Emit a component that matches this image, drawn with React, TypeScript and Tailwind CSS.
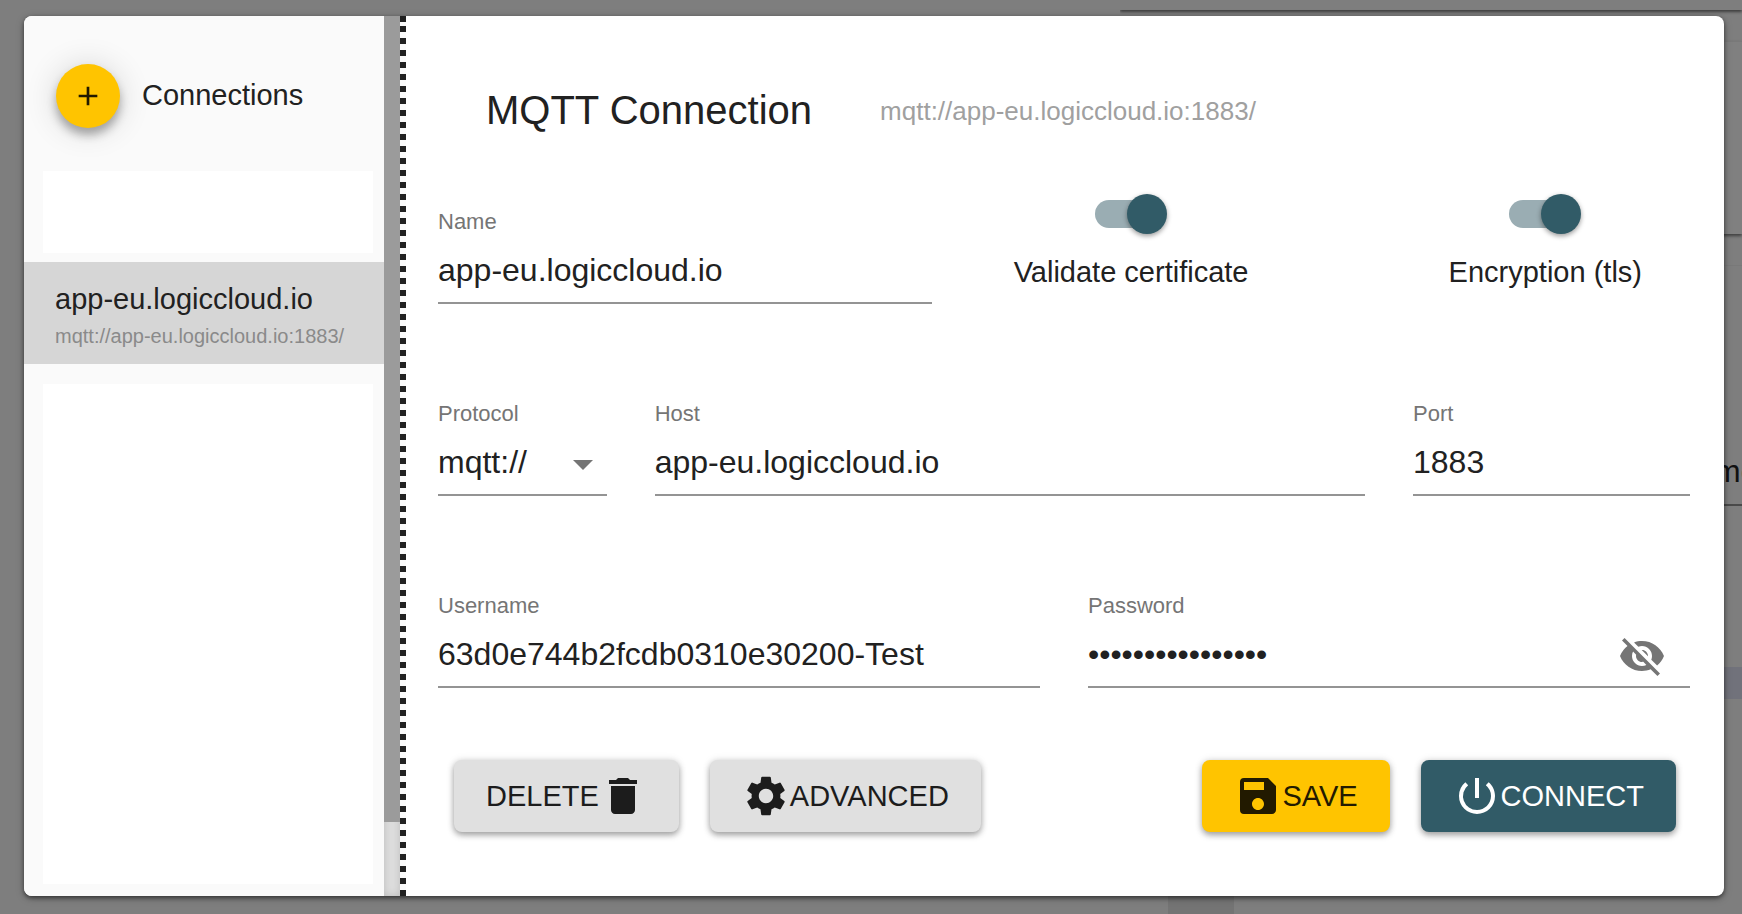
import { useState } from 'react';
import type { InputHTMLAttributes, ReactNode } from 'react';
import {
  MdAdd,
  MdArrowDropDown,
  MdDelete,
  MdPowerSettingsNew,
  MdSave,
  MdSettings,
  MdVisibility,
  MdVisibilityOff,
} from 'react-icons/md';

interface Connection {
  name: string;
  protocol: string;
  host: string;
  port: string;
  username: string;
  password: string;
}

const initialConnection: Connection = {
  name: 'app-eu.logiccloud.io',
  protocol: 'mqtt://',
  host: 'app-eu.logiccloud.io',
  port: '1883',
  username: '63d0e744b2fcdb0310e30200-Test',
  password: 'abcdefghijklmnop',
};

const controlClass =
  'block h-[68px] w-full appearance-none rounded-none border-b-2 border-[#949494] bg-transparent pt-[2px] text-[32px] text-[#212121] focus:outline-none';

interface TextFieldProps extends InputHTMLAttributes<HTMLInputElement> {
  id: string;
  label: string;
}

function FieldLabel({ id, children }: { id: string; children: ReactNode }) {
  return (
    <label htmlFor={id} className="block text-[22px] leading-7 text-[#757575]">
      {children}
    </label>
  );
}

function TextField({ id, label, ...props }: TextFieldProps) {
  return (
    <div>
      <FieldLabel id={id}>{label}</FieldLabel>
      <input id={id} className={controlClass} {...props} />
    </div>
  );
}

function Toggle({ label }: { label: string }) {
  const [checked, setChecked] = useState(true);

  return (
    <label className="-mt-4 flex cursor-pointer flex-col items-center gap-5 text-[29px] leading-8">
      <span className="relative flex h-11 w-[72px] items-center">
        <input
          type="checkbox"
          checked={checked}
          onChange={(e) => setChecked(e.target.checked)}
          className="peer h-7 w-[68px] appearance-none rounded-full bg-[#b0b0b0] checked:bg-[#9aadb3]"
        />
        <span className="pointer-events-none absolute left-0 h-10 w-10 rounded-full bg-[#fafafa] shadow-[0_2px_5px_rgba(0,0,0,0.4)] peer-checked:left-8 peer-checked:bg-[#315b67]" />
      </span>
      {label}
    </label>
  );
}

interface ActionButtonProps {
  className: string;
  children: ReactNode;
}

function ActionButton({ className, children }: ActionButtonProps) {
  return (
    <button
      type="button"
      className={`flex h-[72px] items-center rounded-lg px-8 text-[29px] shadow-[0_3px_6px_rgba(0,0,0,0.35),0_0_8px_rgba(0,0,0,0.1)] ${className}`}
    >
      {children}
    </button>
  );
}

// Dimmed application that stays visible around the dialog
function Backdrop() {
  return (
    <div aria-hidden="true" className="absolute inset-0 flex justify-end overflow-hidden">
      <div className="flex w-[622px] flex-col overflow-hidden">
        <div className="h-[10px] shrink-0 shadow-[0_2px_3px_rgba(0,0,0,0.5)]" />
        <div className="mt-[31px] h-[193px] shrink-0 border-t border-[#797979] bg-[#808080] shadow-[0_2px_3px_rgba(0,0,0,0.5)]" />
        <div className="mt-[31px] flex h-[241px] shrink-0 items-end justify-end border-t border-b-2 border-t-[#797979] border-b-[#4a4a4a]">
          <span className="w-7 text-[32px] leading-[66px] text-[#111111]">me</span>
        </div>
        <div className="mt-[161px] h-8 shrink-0 bg-[#71727b]" />
        <div className="ml-12 w-[66px] flex-1 bg-[#747474]" />
      </div>
    </div>
  );
}

function Sidebar({ connection }: { connection: Connection }) {
  return (
    <aside className="flex w-[382px] shrink-0 bg-[#fafafa]">
      <div className="flex w-[360px] flex-col">
        <div className="flex items-center gap-[22px] px-8 pt-12 pb-[43px]">
          <button
            type="button"
            aria-label="Add connection"
            className="flex h-16 w-16 items-center justify-center rounded-full bg-[#ffc400] text-[#221a00] shadow-[0_7px_10px_rgba(0,0,0,0.3),0_2px_32px_rgba(0,0,0,0.16)]"
          >
            <MdAdd className="h-8 w-8" />
          </button>
          <h2 className="pb-[2px] text-[29px] leading-9">Connections</h2>
        </div>
        <div className="mr-[11px] ml-[19px] h-[82px] bg-white" />
        <button type="button" className="mt-[9px] bg-[#d6d6d6] pt-[19px] pr-8 pb-[14px] pl-[31px] text-left">
          <span className="block text-[29px] leading-9">{connection.name}</span>
          <span className="block pt-[5px] text-[20px] leading-7 text-[#8a8a8a]">
            {connection.protocol}
            {connection.host}:{connection.port}/
          </span>
        </button>
        <div className="mt-5 mr-[11px] mb-3 ml-[19px] flex-1 bg-white" />
      </div>
      <div className="flex w-4 flex-col bg-[#dedede] shadow-[inset_0_0_8px_rgba(0,0,0,0.16)]">
        <div className="flex-1 bg-[#9b9b9b]" />
        <div className="h-[74px]" />
      </div>
      <div className="w-[6px] bg-[repeating-linear-gradient(to_top,#212121_0_6px,#fafafa_6px_12px)]">
        <div className="h-[6px] bg-[#212121]" />
      </div>
    </aside>
  );
}

export default function App() {
  const [connection, setConnection] = useState<Connection>(initialConnection);
  const [showPassword, setShowPassword] = useState(false);

  const update = (key: keyof Connection, value: string) => {
    setConnection({ ...connection, [key]: value });
  };

  return (
    <div className="relative flex min-h-screen bg-[#7e7e7e] pt-4 pr-[18px] pb-[18px] pl-6 font-['Liberation_Sans',Arial,sans-serif] text-[#212121]">
      <Backdrop />

      <div
        role="dialog"
        aria-label="MQTT Connection"
        className="relative flex flex-1 overflow-hidden rounded-lg bg-white shadow-[0_2px_4px_rgba(0,0,0,0.5),0_2px_10px_rgba(0,0,0,0.2)]"
      >
        <Sidebar connection={connection} />

        <form className="flex min-w-0 flex-1 flex-col pt-[70px] pr-[34px] pb-16 pl-8">
          <div className="flex items-center gap-[68px] pl-12">
            <h1 className="text-[40px] leading-[48px]">MQTT Connection</h1>
            <p className="pt-[2px] text-[26px] leading-[46px] text-[#a0a0a0]">
              {connection.protocol}
              {connection.host}:{connection.port}/
            </p>
          </div>

          <div className="mt-[74px] grid grid-cols-12 gap-x-12 gap-y-24">
            <div className="col-span-5">
              <TextField
                id="name"
                label="Name"
                value={connection.name}
                onChange={(e) => update('name', e.target.value)}
              />
            </div>
            <div className="col-span-7 flex items-start justify-between pr-12 pl-[34px]">
              <Toggle label="Validate certificate" />
              <Toggle label="Encryption (tls)" />
            </div>

            <div className="col-span-2">
              <FieldLabel id="protocol">Protocol</FieldLabel>
              <div className="relative">
                <select
                  id="protocol"
                  value={connection.protocol}
                  onChange={(e) => update('protocol', e.target.value)}
                  className={controlClass}
                >
                  <option>mqtt://</option>
                  <option>ws://</option>
                </select>
                <MdArrowDropDown className="pointer-events-none absolute top-3 right-0 h-12 w-12 text-[#757575]" />
              </div>
            </div>
            <div className="col-span-7">
              <TextField
                id="host"
                label="Host"
                value={connection.host}
                onChange={(e) => update('host', e.target.value)}
              />
            </div>
            <div className="col-span-3">
              <TextField
                id="port"
                label="Port"
                value={connection.port}
                onChange={(e) => update('port', e.target.value)}
              />
            </div>

            <div className="col-span-6">
              <TextField
                id="username"
                label="Username"
                value={connection.username}
                onChange={(e) => update('username', e.target.value)}
              />
            </div>
            <div className="relative col-span-6">
              <TextField
                id="password"
                label="Password"
                type={showPassword ? 'text' : 'password'}
                value={connection.password}
                onChange={(e) => update('password', e.target.value)}
              />
              <button
                type="button"
                aria-label="Toggle password visibility"
                onClick={() => setShowPassword(!showPassword)}
                className="absolute right-6 bottom-2 text-[#757575]"
              >
                {showPassword ? (
                  <MdVisibility className="h-12 w-12" />
                ) : (
                  <MdVisibilityOff className="h-12 w-12" />
                )}
              </button>
            </div>
          </div>

          <div className="mt-[72px] flex justify-between pr-[14px] pl-4">
            <div className="flex gap-[31px]">
              <ActionButton className="bg-[#e0e0e0] text-[#1c1c1c]">
                <span className="pt-[2px]">DELETE</span>
                <MdDelete className="h-12 w-12" />
              </ActionButton>
              <ActionButton className="bg-[#e0e0e0] text-[#1c1c1c]">
                <MdSettings className="h-12 w-12" />
                <span className="pt-[2px]">ADVANCED</span>
              </ActionButton>
            </div>
            <div className="flex gap-[31px]">
              <ActionButton className="bg-[#ffc400] text-[#221a00]">
                <MdSave className="h-12 w-12" />
                <span className="pt-[2px]">SAVE</span>
              </ActionButton>
              <ActionButton className="bg-[#315b67] text-white">
                <MdPowerSettingsNew className="h-12 w-12" />
                <span className="pt-[2px]">CONNECT</span>
              </ActionButton>
            </div>
          </div>
        </form>
      </div>
    </div>
  );
}
